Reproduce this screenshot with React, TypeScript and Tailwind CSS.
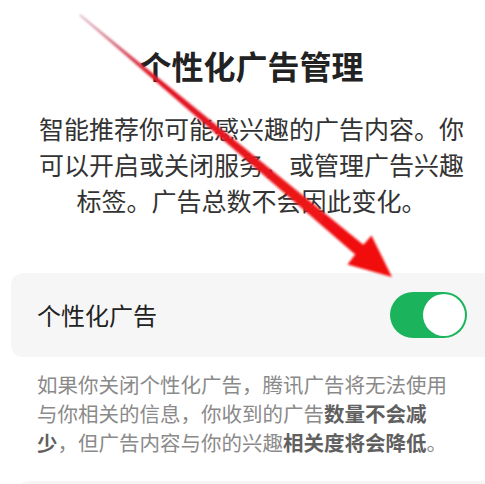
export default function App() {
  return (
    <div className="relative w-[485px] h-[484px] overflow-hidden bg-white font-['Noto_Sans_CJK_SC','Noto_Sans',sans-serif]">
      {/* Title */}
      <h1 className="pt-[45px] pl-[18px] text-center text-[32px] leading-[40px] font-bold text-[#222]">
        个性化广告管理
      </h1>

      {/* Intro */}
      <p className="mt-[25px] pl-[18px] text-center text-[25px] leading-[36px] text-[#333]">
        智能推荐你可能感兴趣的广告内容。你
        <br />
        可以开启或关闭服务，或管理广告兴趣
        <br />
        标签。广告总数不会因此变化。
      </p>

      {/* Toggle row */}
      <div className="mt-[55px] ml-[11px] h-[84px] flex items-center justify-between pl-[26px] pr-[18px] rounded-l-[12px] bg-[#f6f6f6]">
        <span className="text-[24px] text-[#222]">个性化广告</span>
        <div className="w-[77px] h-[46px] rounded-full bg-[#1bb35b] flex items-center justify-end p-[2px]">
          <div className="w-[42px] h-[42px] rounded-full bg-white" />
        </div>
      </div>

      {/* Note */}
      <p className="mt-[13px] pl-[37px] text-[20.5px] leading-[29px] text-[#8a8a8a]">
        如果你关闭个性化广告，腾讯广告将无法使用
        <br />
        与你相关的信息，你收到的广告<b className="font-semibold text-[#606060]">数量不会减</b>
        <br />
        <b className="font-semibold text-[#606060]">少</b>，但广告内容与你的兴趣<b className="font-semibold text-[#606060]">相关度将会降低</b>。
      </p>

      {/* Next card edge */}
      <div className="mt-[24px] ml-[17px] h-[20px] rounded-tl-[12px] bg-[#f6f6f6]" />

      {/* Red annotation arrow */}
      <svg className="absolute inset-0 pointer-events-none" width="485" height="484" viewBox="0 0 485 484">
        <defs>
          <linearGradient id="shaft" x1="80" y1="15" x2="360" y2="250" gradientUnits="userSpaceOnUse">
            <stop offset="0" stopColor="#b04a6a" stopOpacity="0.5" />
            <stop offset="0.25" stopColor="#e01a2a" />
            <stop offset="1" stopColor="#f2100f" />
          </linearGradient>
          <filter id="soft" x="-10%" y="-10%" width="120%" height="120%">
            <feGaussianBlur stdDeviation="0.8" />
          </filter>
        </defs>
        <g filter="url(#soft)">
          <polygon points="79.5,15.6 355.5,254.8 364,245.2 80.5,14.4" fill="url(#shaft)" />
          <polygon points="392,277 347.5,264.5 357,252 371.5,235.5" fill="#f2100f" />
        </g>
      </svg>
    </div>
  )
}
